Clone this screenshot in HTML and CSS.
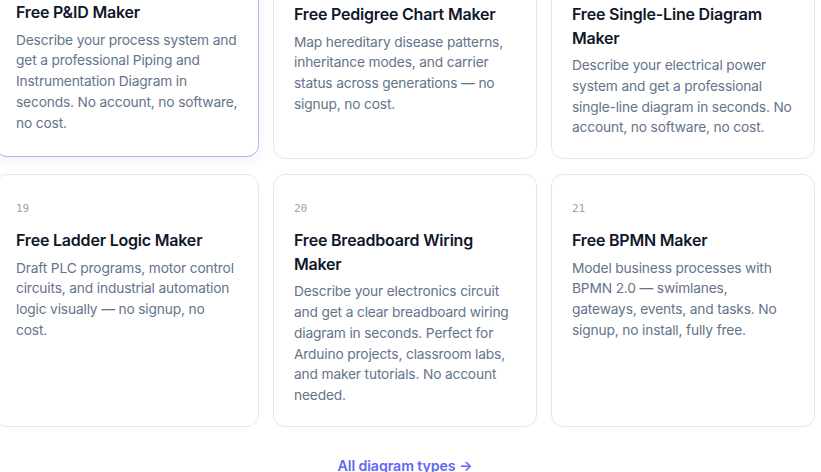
FILE: index.html
```html
<!DOCTYPE html>
<html>
	<head>
		<title>Free Diagram Makers</title>

		<link rel="stylesheet" href="styles.css">
	</head>

	<body>
		<section class="toolsSection">
			<div class="toolGrid">
				<a class="toolCard isActive" href="#">
					<span class="toolIndex">16</span>
					<h3 class="toolTitle">Free P&amp;ID Maker</h3>
					<p class="toolText">Describe your process system and get a professional Piping and Instrumentation Diagram in seconds. No account, no software, no cost.</p>
				</a>
				<a class="toolCard" href="#">
					<span class="toolIndex">17</span>
					<h3 class="toolTitle">Free Pedigree Chart Maker</h3>
					<p class="toolText">Map hereditary disease patterns, inheritance modes, and carrier status across generations — no signup, no cost.</p>
				</a>
				<a class="toolCard" href="#">
					<span class="toolIndex">18</span>
					<h3 class="toolTitle">Free Single-Line Diagram Maker</h3>
					<p class="toolText">Describe your electrical power system and get a professional single-line diagram in seconds. No account, no software, no cost.</p>
				</a>
				<a class="toolCard" href="#">
					<span class="toolIndex">19</span>
					<h3 class="toolTitle">Free Ladder Logic Maker</h3>
					<p class="toolText">Draft PLC programs, motor control circuits, and industrial automation logic visually — no signup, no cost.</p>
				</a>
				<a class="toolCard" href="#">
					<span class="toolIndex">20</span>
					<h3 class="toolTitle">Free Breadboard Wiring Maker</h3>
					<p class="toolText">Describe your electronics circuit and get a clear breadboard wiring diagram in seconds. Perfect for Arduino projects, classroom labs, and maker tutorials. No account needed.</p>
				</a>
				<a class="toolCard" href="#">
					<span class="toolIndex">21</span>
					<h3 class="toolTitle">Free BPMN Maker</h3>
					<p class="toolText">Model business processes with BPMN 2.0 — swimlanes, gateways, events, and tasks. No signup, no install, fully free.</p>
				</a>
			</div>

			<div class="sectionFooter">
				<a class="allLink" href="#">All diagram types →</a>
			</div>
		</section>
	</body>
</html>
```

FILE: styles.css
```css
body
{
	margin: 0;
	background-color: #ffffff;
	font-family: Inter, "Noto Sans", sans-serif;
	color: #0f172a;
}

.toolsSection
{
	width: 820px;
	margin: -52px 0 0 -5px;
}

.toolGrid
{
	display: grid;
	grid-template-columns: repeat(3, 264px);
	column-gap: 14px;
	row-gap: 15px;
}

.toolCard
{
	display: flex;
	flex-direction: column;
	padding: 26px 20px 20px 20px;
	border: 1px solid #e2e8f0;
	border-radius: 12px;
	background-color: #ffffff;
	text-decoration: none;
	color: inherit;
}

.toolCard.isActive
{
	border-color: #a5b4fc;
	box-shadow: 0 4px 12px rgba(99, 102, 241, 0.08);
	transform: translateY(-2px);
}

.toolIndex
{
	font-family: "DejaVu Sans Mono", monospace;
	font-size: 11px;
	line-height: 16px;
	color: #94a3b8;
	margin-bottom: 12px;
}

.toolTitle
{
	margin: 0 0 5px 0;
	font-size: 16px;
	font-weight: 600;
	letter-spacing: -0.2px;
	line-height: 23.5px;
	color: #0f172a;
}

.toolText
{
	margin: 0;
	font-size: 13.75px;
	letter-spacing: -0.16px;
	line-height: 20.8px;
	color: #64748b;
}

.sectionFooter
{
	margin-top: 28px;
	text-align: center;
}

.allLink
{
	font-size: 14.2px;
	font-weight: 600;
	letter-spacing: -0.1px;
	line-height: 20px;
	color: #6366f1;
	text-decoration: none;
}
```
